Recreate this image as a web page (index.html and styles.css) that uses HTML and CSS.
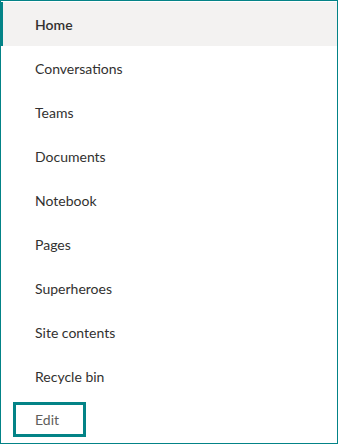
FILE: index.html
```html
<!DOCTYPE html>
<html lang="en">
<head>
    <meta charset="UTF-8">
    <title>Site navigation</title>
    <link rel="stylesheet" href="styles.css">
</head>
<body>
    <nav class="nav">
        <a class="nav-link selected" href="#">Home</a>
        <a class="nav-link" href="#">Conversations</a>
        <a class="nav-link" href="#">Teams</a>
        <a class="nav-link" href="#">Documents</a>
        <a class="nav-link" href="#">Notebook</a>
        <a class="nav-link" href="#">Pages</a>
        <a class="nav-link" href="#">Superheroes</a>
        <a class="nav-link" href="#">Site contents</a>
        <a class="nav-link" href="#">Recycle bin</a>
        <button class="edit-btn" type="button">Edit</button>
    </nav>
</body>
</html>
```

FILE: styles.css
```css
body {
    margin: 0;
    font-family: "Segoe UI", Lato, "Open Sans", sans-serif;
    background: white;
}
.nav {
    box-sizing: border-box;
    width: 338px;
    height: 444px;
    border: 1px solid #038387;
    padding-top: 1px;
    display: flex;
    flex-direction: column;
}
.nav-link {
    display: flex;
    align-items: center;
    height: 44px;
    flex-shrink: 0;
    padding-left: 34px;
    font-size: 14px;
    color: #323130;
    text-decoration: none;
}
.nav-link.selected {
    background-color: #f3f2f1;
    font-weight: 600;
    border-left: 2px solid #038387;
    padding-left: 32px;
}
.edit-btn {
    align-self: flex-start;
    margin: 4px 0 0 12px;
    width: 73px;
    height: 35px;
    box-sizing: border-box;
    border: 3px solid #038387;
    background: white;
    padding: 0 0 0 19px;
    text-align: left;
    font-family: inherit;
    font-size: 14px;
    color: #605e5c;
}
```
